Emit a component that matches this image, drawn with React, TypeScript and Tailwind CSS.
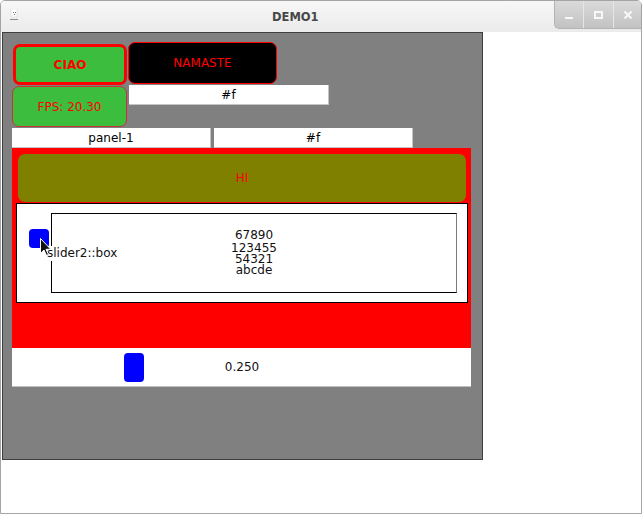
import React from "react";

const lines = ["67890", "123455", "54321", "abcde"];

function TitleBar() {
    return (
        <div className="h-[31px] shrink-0 flex relative bg-gradient-to-b from-[#f7f7f7] to-[#ebebeb]">
            <div className="w-[8px] h-[12px] mt-[8px] ml-[9px] flex flex-col items-center">
                <svg width="8" height="12" viewBox="0 0 8 12">
                    <rect x="1" y="0" width="6" height="8" fill="#ffffff" stroke="#d0d0d0" strokeWidth="0.5" />
                    <rect x="3" y="3" width="1" height="1" fill="#6a6a6a" />
                    <rect x="5" y="3" width="1" height="1" fill="#6a6a6a" />
                    <rect x="4" y="5" width="1" height="1" fill="#6a6a6a" />
                    <rect x="0" y="10" width="8" height="1" fill="#8a8a8a" />
                </svg>
            </div>
            <div className="ml-[254px] mt-[9px] text-[11.5px] leading-[14px] font-bold text-[#474747]">DEMO1</div>
            <div className="absolute right-0 top-0 h-[28px] w-[87px] flex rounded-bl-[5px] overflow-hidden border-l border-b border-[#b4b4b4] bg-gradient-to-b from-[#dadada] to-[#c2c2c2]">
                <div className="w-[28px] h-full flex items-end justify-center pb-[9px]">
                    <div className="w-[8px] h-[2px] bg-[#f8f8f8]" />
                </div>
                <div className="w-[30px] h-full border-l border-[#e6e6e6] flex items-center justify-center">
                    <div className="w-[9px] h-[8px] border-2 border-[#f8f8f8]" />
                </div>
                <div className="w-[28px] h-full border-l border-[#e6e6e6] flex items-center justify-center">
                    <svg width="10" height="10" viewBox="0 0 10 10">
                        <path d="M1.5 1.5 L8.5 8.5 M8.5 1.5 L1.5 8.5" stroke="#f8f8f8" strokeWidth="2" />
                    </svg>
                </div>
            </div>
        </div>
    );
}

function Cursor() {
    return (
        <svg className="absolute left-[23px] top-[34px]" width="12" height="19" viewBox="0 0 12 19">
            <path d="M0.5 0.5 L0.5 15.5 L4 12 L6.5 17.5 L8.5 16.5 L6 11.3 L10.8 11.3 Z" fill="#111111" stroke="#ffffff" strokeWidth="1" />
        </svg>
    );
}

export default function App() {
    const value = 0.25;

    return (
        <div className="w-[642px] h-[514px] bg-white flex flex-col border border-[#a4a4a4] rounded-t-[5px] overflow-hidden font-['DejaVu_Sans',sans-serif] text-[12px]">
            <TitleBar />
            <div className="flex-1">
                <div className="ml-[1px] w-[481px] h-[428px] bg-[#808080] border border-[#3e3e3e] flex flex-col">
                    {/* row 1 */}
                    <div className="flex items-start mt-[9px] pl-[10px]">
                        <div className="mt-[2px] w-[114px] h-[41px] rounded-[7px] border-[3px] border-[#ff0000] bg-[#3dbd3d] flex items-center justify-center font-bold text-[#ff0000]">
                            CIAO
                        </div>
                        <div className="ml-[1px] w-[149px] h-[42px] rounded-[7px] border border-[#ff0000] bg-black flex items-center justify-center text-[#ff0000]">
                            NAMASTE
                        </div>
                    </div>
                    {/* row 2 */}
                    <div className="flex items-start pl-[9px]">
                        <div className="mt-[1px] w-[115px] h-[41px] rounded-[7px] border border-[#c83232] bg-[#3dbd3d] flex items-center justify-center text-[#ff0000]">
                            FPS: 20.30
                        </div>
                        <div className="ml-[2px] w-[200px] h-[20px] bg-white border-r border-b border-[#c4c4c4] flex items-center justify-center text-black">
                            #f
                        </div>
                    </div>
                    {/* row 3 */}
                    <div className="flex mt-[1px] pl-[9px]">
                        <div className="w-[199px] h-[20px] bg-white border-r border-b border-[#c4c4c4] flex items-center justify-center text-black">
                            panel-1
                        </div>
                        <div className="ml-[3px] w-[199px] h-[20px] bg-white border-r border-b border-[#c4c4c4] flex items-center justify-center text-black">
                            #f
                        </div>
                    </div>
                    {/* red panel */}
                    <div className="ml-[9px] w-[459px] h-[200px] bg-[#ff0000] flex flex-col pt-[6px]">
                        <div className="ml-[6px] w-[448px] h-[48px] rounded-[7px] bg-[#808000] flex items-center justify-center text-[#ff0000]">
                            HI
                        </div>
                        <div className="ml-[4px] mt-[1px] w-[452px] h-[100px] bg-white border border-black relative flex items-start">
                            <div className="ml-[12px] mt-[25px] w-[20px] h-[19px] rounded-[4px] bg-[#0000ff]" />
                            <div className="ml-[2px] mt-[9px] w-[406px] h-[80px] border border-black border-r-[#7a7a7a] flex flex-col items-center pt-[15px] text-[#111111]">
                                {lines.map((l, i) => (
                                    <div key={l} className={i === 0 ? "leading-[13px] mb-[1px]" : "leading-[11px]"}>{l}</div>
                                ))}
                            </div>
                            <div className="absolute left-[29px] top-[42px] bg-white leading-[15px] text-[#111111] pl-[1px]">slider2::box</div>
                            <Cursor />
                        </div>
                    </div>
                    {/* slider row */}
                    <div className="ml-[9px] w-[459px] h-[39px] bg-white border-b border-[#c0c0c0] relative flex items-center justify-center text-[#111111]">
                        <div
                            className="absolute top-[5px] w-[20px] h-[29px] rounded-[4px] bg-[#0000ff]"
                            style={{ left: Math.round(value * 448) }}
                        />
                        <span className="ml-[1px]">0.250</span>
                    </div>
                </div>
            </div>
        </div>
    );
}
